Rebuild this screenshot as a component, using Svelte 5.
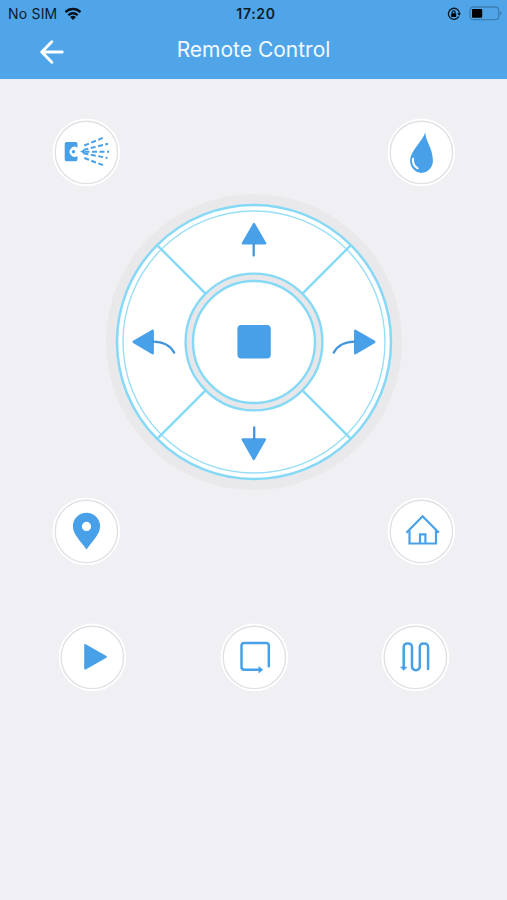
<script lang="ts">
	let active = ""

	const topRow = ["spray", "water"]
	const middleRow = ["locate", "home"]
	const bottomRow = ["start", "edge", "zigzag"]

	function send(command: string) {
		active = command
	}

	function handleKey(e: KeyboardEvent, command: string) {
		if (e.key == "Enter" || e.key == " ") send(command)
	}
</script>

<svelte:head>
	<title>Remote Control</title>
</svelte:head>

{#snippet icon(name: string)}
	<svg class="icon" viewBox="-.5 -.5 68 68">
		<!-- button face with its thin inner ring -->
		<circle class="face" cx="33.9" cy="33.9" r="33.8" />
		<circle class="rim" cx="33.9" cy="33.9" r="31.2" />
		{#if name == "spray"}
			<path class="fill" d="M14 23.5h9.2a1.8 1.8 0 0 1 1.8 1.8v3.9a5 5 0 1 0 0 8.2v3.500a1.8 1.8 0 0 1-1.8 1.8H14a1.8 1.8 0 0 1-1.8-1.8V25.3a1.8 1.8 0 0 1 1.8-1.8z" />
			<circle class="fill" cx="21" cy="33.2" r="1.7" />
			<path class="fill" d="M27.700 33.100l4.300-2.400v4.800z" />
			<g class="spray">
				<path d="M31.800 27l19.500-8" />
				<path d="M31 31.400l24.500-6.100" />
				<path d="M32 33.200h24.500" />
				<path d="M31 34.700l24 4.800" />
				<path d="M31.800 39.500l19.500 7.500" />
			</g>
		{:else if name == "water"}
			<path class="fill" d="M37.8 14c.2 9.200 7.600 15.300 7.600 28.200A11.4 12.200 0 0 1 22.600 42.200C22.600 32.500 34.500 23.500 37.800 14z" />
			<path class="shine" d="M25.600 40.200c-.6 4 1.200 7.700 4.600 9.600" />
		{:else if name == "locate"}
			<path class="fill" fill-rule="evenodd" d="M34 15.2a13.6 13.6 0 0 0-13.6 13.7c0 8.2 8.400 15 13.6 23.200 5.200-8.200 13.6-15 13.6-23.200A13.6 13.6 0 0 0 34 15.200zm0 9.100a4.600 4.600 0 1 1 0 9.200 4.600 4.600 0 0 1 0-9.200z" />
		{:else if name == "home"}
			<g class="line">
				<path d="M18.900 35.300L35.100 18.800l16.300 16.500" />
				<path d="M22 33v13h26.500V33" />
				<path d="M32.500 46v-9.200h5.400V46" />
			</g>
		{:else if name == "start"}
			<path class="fill round" d="M26.7 21.500v23.600l20.700-11.800z" />
		{:else if name == "edge"}
			<g class="line thick">
				<path d="M48.3 42.800V22.300a2.7 2.7 0 0 0-2.7-2.7H23.7a2.7 2.7 0 0 0-2.7 2.7v21.200a2.7 2.7 0 0 0 2.7 2.7h16" />
			</g>
			<path class="fill" d="M38 42.400l4.700 3.800-4.700 3.800z" />
		{:else}
			<g class="line thick">
				<path d="M22.2 44.500V23.600a3.7 3.7 0 0 1 3.700-3.700h.9a3.7 3.7 0 0 1 3.700 3.700V43a3.7 3.7 0 0 0 3.700 3.700h.4a3.7 3.7 0 0 0 3.700-3.700V23.600a3.7 3.7 0 0 1 3.700-3.700h.9a3.7 3.7 0 0 1 3.700 3.700V45.600" />
			</g>
			<path class="fill" d="M18.400 43.300h7.600l-3.800 4z" />
		{/if}
	</svg>
{/snippet}

<div class="screen">
	<header>
		<div class="status">
			<div class="carrier">
				<span>No SIM</span>
				<svg width="18" height="14" viewBox="0 0 18 14">
					<path d="M1.5 5.1a10.6 10.6 0 0 1 15 0" />
					<path d="M4.3 8.2a6.7 6.7 0 0 1 9.4 0" />
					<path class="dot" d="M9 13L6 10.1a4.3 4.3 0 0 1 6 0z" />
				</svg>
			</div>
			<span class="time">17:20</span>
			<div class="indicators">
				<svg width="14" height="14" viewBox="0 0 14 14">
					<path class="ring" d="M11.8 9.4A5.5 5.5 0 1 1 12.4 6" />
					<path d="M10.2 6.2h3.8l-1.8 2.6z" />
					<rect x="4.2" y="6.2" width="5" height="3.7" rx=".5" />
					<path class="ring" d="M5.3 6.4V5.2a1.4 1.4 0 0 1 2.8 0v1.2" />
				</svg>
				<svg width="33" height="15" viewBox="0 0 33 15">
					<rect class="case" x="1" y="1" width="28.6" height="12.6" rx="3.2" />
					<rect x="3" y="2.9" width="10.2" height="8.8" rx="1" />
					<path class="cap" d="M30.900 5v4.600c2-.8 2-3.800 0-4.600z" />
				</svg>
			</div>
		</div>
		<div class="bar">
			<button class="back" aria-label="Back">
				<svg width="26" height="26" viewBox="0 0 26 26">
					<path d="M24.200 13H3.800M13.800 2.800L3.800 13l10 10.200" />
				</svg>
			</button>
			<h1>Remote Control</h1>
		</div>
	</header>

	<main>
		<div class="row">
			{#each topRow as name}
				<button class="round-button" aria-label={name} onclick={() => send(name)}>{@render icon(name)}</button>
			{/each}
		</div>

		<svg class="dial" width="296" height="296" viewBox="-148 -148 296 296">
			<circle class="halo" r="148" />
			<circle class="plate" r="137" />
			<circle class="inner" r="131" />
			{#each [45, 135, 225, 315] as angle}
				<path class="divider" d="M68.5 0H137" transform="rotate({angle})" />
			{/each}
			<circle class="groove" r="68.4" />
			<circle class="hub" r="61" />

			<g role="button" tabindex="0" aria-label="forward" onclick={() => send("forward")} onkeydown={e => handleKey(e, "forward")}>
				<path class="head" d="M0-118L11.1-98.700H-11.1z" />
				<path class="tail" d="M-.3-98v11.600" />
			</g>
			<g role="button" tabindex="0" aria-label="backward" onclick={() => send("backward")} onkeydown={e => handleKey(e, "backward")}>
				<path class="head" d="M-.2 117L10.900 97.500H-11.300z" />
				<path class="tail" d="M.2 97V85.400" />
			</g>
			<g role="button" tabindex="0" aria-label="left" onclick={() => send("left")} onkeydown={e => handleKey(e, "left")}>
				<path class="head" d="M-120.3-.1L-101.300-11.200V11.200z" />
				<path class="tail" d="M-101-.4c9.500 0 17 3.400 21.200 11" />
			</g>
			<g role="button" tabindex="0" aria-label="right" onclick={() => send("right")} onkeydown={e => handleKey(e, "right")}>
				<path class="head" d="M120.300-.1L101.200-11.200V11.200z" />
				<path class="tail" d="M100.900-.4c-9.500 0-17 3.400-21.200 11" />
			</g>
			<rect class="stop" x="-16.6" y="-17" width="33.4" height="33.4" rx="4" />
		</svg>

		<div class="row">
			{#each middleRow as name}
				<button class="round-button" aria-label={name} onclick={() => send(name)}>{@render icon(name)}</button>
			{/each}
		</div>

		<div class="row bottom">
			{#each bottomRow as name}
				<button class="round-button" aria-label={name} onclick={() => send(name)}>{@render icon(name)}</button>
			{/each}
		</div>
	</main>
</div>

<style>
	:global(body) {
		margin: 0;
		background: #efeff4;
	}

	.screen {
		min-height: 900px;
		background: #efeff4;
		font-family: Inter, "Liberation Sans", sans-serif;
	}

	header {
		height: 79px;
		background: #50a5e8;
	}

	button {
		padding: 0;
		border: none;
		background: none;
	}

	.status {
		display: grid;
		grid-template-columns: 1fr auto 1fr;
		align-items: center;
		height: 27px;
		padding: 0 5px 0 8px;
		font-size: 14px;
		color: #0b1c2b;
	}

	.carrier {
		display: flex;
		align-items: center;
		gap: 7px;
		letter-spacing: 0.2px;
	}

	.carrier path {
		fill: none;
		stroke: #06121d;
		stroke-width: 2.3;
	}

	.carrier .dot {
		fill: #06121d;
		stroke: none;
	}

	.time {
		padding-left: 2px;
		font-weight: 600;
		letter-spacing: 0.7px;
	}

	.indicators {
		display: flex;
		justify-content: flex-end;
		align-items: center;
		gap: 8px;
	}

	.ring {
		fill: none;
		stroke: #0b1c2b;
		stroke-width: 1.3;
	}

	.case {
		fill: none;
		stroke: #3b7eb3;
		stroke-width: 1.3;
	}

	.cap {
		fill: #3b7eb3;
	}

	.bar {
		display: grid;
		grid-template-columns: 64px 1fr 64px;
		align-items: center;
		height: 45px;
	}

	.back {
		display: flex;
		justify-content: flex-end;
		padding-top: 5px;
	}

	.back path {
		fill: none;
		stroke: #fff;
		stroke-width: 3;
		stroke-linecap: round;
		stroke-linejoin: round;
	}

	h1 {
		margin: 0;
		font-size: 21px;
		font-weight: 400;
		text-align: center;
		color: #f2faff;
	}

	main {
		display: flex;
		flex-direction: column;
		align-items: center;
		padding-top: 39px;
	}

	.row {
		display: flex;
		justify-content: space-between;
		box-sizing: border-box;
		width: 100%;
		padding: 0 52px;
	}

	.bottom {
		margin-top: 58px;
		padding: 0 58px;
	}

	.round-button {
		width: 68px;
		height: 68px;
		border-radius: 50%;
	}

	.icon {
		display: block;
		width: 68px;
		height: 68px;
	}

	.face {
		fill: #fff;
	}

	.rim {
		fill: none;
		stroke: #e0e1e6;
		stroke-width: 1.4;
	}

	.fill {
		fill: #48a1e8;
	}

	.round {
		stroke: #48a1e8;
		stroke-width: 2;
		stroke-linejoin: round;
	}

	.line {
		fill: none;
		stroke: #48a1e8;
		stroke-width: 2.2;
	}

	.thick {
		stroke-width: 2.5;
		stroke-linecap: round;
	}

	.spray {
		fill: none;
		stroke: #48a1e8;
		stroke-width: 2;
		stroke-dasharray: 5 2.5;
	}

	.shine {
		fill: none;
		stroke: #fff;
		stroke-width: 2;
		stroke-linecap: round;
	}

	.dial {
		display: block;
		margin: 8px 0 7px;
	}

	.halo {
		fill: #e9e9eb;
	}

	.plate {
		fill: #fff;
		stroke: #86d9f6;
		stroke-width: 2.5;
	}

	.inner {
		fill: none;
		stroke: #98def6;
		stroke-width: 1.4;
	}

	.divider {
		stroke: #86d9f6;
		stroke-width: 2.4;
	}

	.groove {
		fill: #e7e7e9;
		stroke: #86d9f6;
		stroke-width: 2.4;
	}

	.hub {
		fill: #fff;
		stroke: #86d9f6;
		stroke-width: 2.4;
	}

	.head {
		fill: #48a1e8;
		stroke: #48a1e8;
		stroke-width: 2.4;
		stroke-linejoin: round;
	}

	.tail {
		fill: none;
		stroke: #4596d8;
		stroke-width: 2.3;
		stroke-linecap: round;
	}

	.stop {
		fill: #48a1e8;
	}
</style>
